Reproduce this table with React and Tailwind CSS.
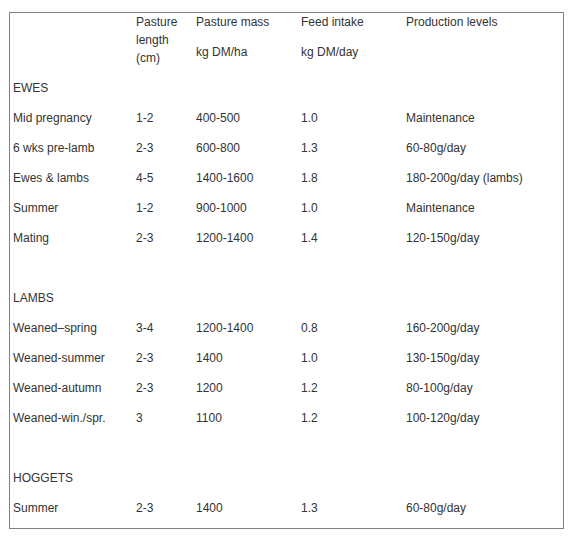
const sections = [
  {
    title: 'EWES',
    rows: [
      ['Mid pregnancy', '1-2', '400-500', '1.0', 'Maintenance'],
      ['6 wks pre-lamb', '2-3', '600-800', '1.3', '60-80g/day'],
      ['Ewes & lambs', '4-5', '1400-1600', '1.8', '180-200g/day (lambs)'],
      ['Summer', '1-2', '900-1000', '1.0', 'Maintenance'],
      ['Mating', '2-3', '1200-1400', '1.4', '120-150g/day'],
    ],
  },
  {
    title: 'LAMBS',
    rows: [
      ['Weaned\u2013spring', '3-4', '1200-1400', '0.8', '160-200g/day'],
      ['Weaned-summer', '2-3', '1400', '1.0', '130-150g/day'],
      ['Weaned-autumn', '2-3', '1200', '1.2', '80-100g/day'],
      ['Weaned-win./spr.', '3', '1100', '1.2', '100-120g/day'],
    ],
  },
  {
    title: 'HOGGETS',
    rows: [['Summer', '2-3', '1400', '1.3', '60-80g/day']],
  },
];

const cols = 'grid grid-cols-[123px_60px_105px_105px_1fr]';

const Row = ({ cells }) => (
  <div className={`${cols} h-[30px] items-center`}>
    {cells.map((c, i) => (
      <div key={i} className="whitespace-nowrap">
        {c}
      </div>
    ))}
  </div>
);

export default function App() {
  return (
    <div className="bg-white w-[570px] h-[539px] pt-[12px] pl-[9px]">
      <div
        className="w-[555px] h-[517px] border border-[#808080] pl-[3px] pb-[5px] text-[12px] leading-[18px] text-[#333333]"
        style={{ fontFamily: '"Liberation Sans", Arial, sans-serif' }}
      >
        <div className={`${cols} h-[60px]`}>
          <div />
          <div>
            Pasture
            <br />
            length
            <br />
            (cm)
          </div>
          <div>
            <p>Pasture mass</p>
            <p className="mt-[12px]">kg DM/ha</p>
          </div>
          <div>
            <p>Feed intake</p>
            <p className="mt-[12px]">kg DM/day</p>
          </div>
          <div>Production levels</div>
        </div>
        {sections.map((s, si) => (
          <div key={s.title}>
            {si > 0 && <div className="h-[30px]" />}
            <div className="h-[30px] flex items-center">{s.title}</div>
            {s.rows.map((r, i) => (
              <Row key={i} cells={r} />
            ))}
          </div>
        ))}
      </div>
    </div>
  );
}
